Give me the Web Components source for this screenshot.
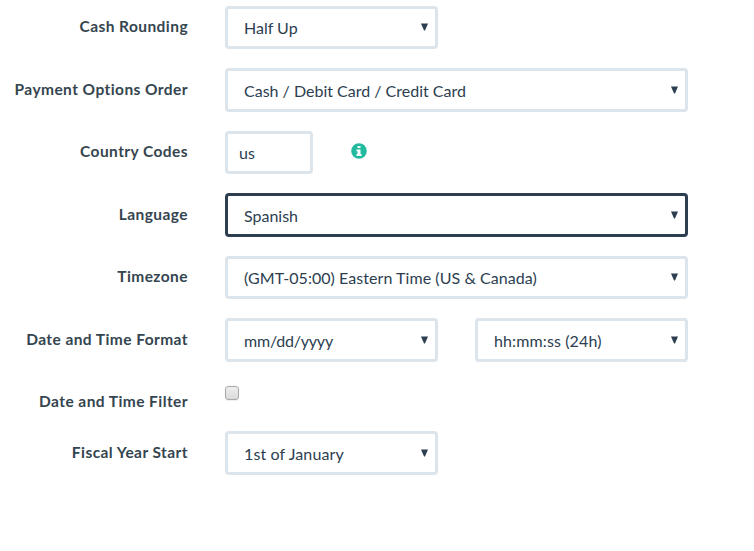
<!DOCTYPE html>
<html lang="en"><head><meta charset="utf-8"><title>Settings</title>
<style>body{margin:0;background:#fff;color:#2c3e50;font:400 16px/24px Lato,sans-serif}</style></head><body>
<settings-form></settings-form>
<script>
class FormRow extends HTMLElement{constructor(){super();this.attachShadow({mode:'open'}).innerHTML=`<style>
:host{display:grid;grid-template-columns:188px 1fr;column-gap:37px;height:43.2px;margin-bottom:19.3px;align-items:start}
:host([compact]){height:25px;margin-bottom:25.7px}
.label{font-weight:700;font-size:15.5px;letter-spacing:.43px;font-variant-ligatures:none;line-height:22px;text-align:right;padding-top:9.2px;white-space:nowrap;color:#34454f}
.body{display:flex;gap:37px;align-items:flex-start}</style>
<div class="label">${this.getAttribute('label')}</div><div class="body"><slot></slot></div>`}}
class SelectField extends HTMLElement{constructor(){super();this.attachShadow({mode:'open'}).innerHTML=`<style>
:host{display:flex;box-sizing:border-box;width:213px;height:43.2px;border:3px solid #dce4ec;border-radius:4px;padding:0 7px 0 16px;align-items:center;justify-content:space-between;white-space:nowrap}
:host([wide]){width:463px}:host([focused]){border-color:#2c3e50}
.text{padding-top:1.2px;letter-spacing:var(--tracking,0)}svg{display:block;flex:none}</style>
<span class="text"><slot></slot></span><svg width="7" height="8" viewBox="0 0 7 8"><path d="M0 .5h7L4 7.500h-1z" fill="#2c3e50"/></svg>`}}
class TextField extends HTMLElement{constructor(){super();this.attachShadow({mode:'open'}).innerHTML=`<style>
:host{display:flex;box-sizing:border-box;width:88px;height:43.2px;border:3px solid #dce4ec;border-radius:4px;padding:1.2px 11px 0;align-items:center}</style><slot></slot>`}}
class InfoIcon extends HTMLElement{constructor(){super();this.attachShadow({mode:'open'}).innerHTML=`<style>:host{display:block;margin:12.1px 0 0 .5px}svg{display:block}</style>
<svg width="16" height="16" viewBox="0 0 16 16"><circle cx="8" cy="8" r="7.8" fill="#22bba0"/><path d="M6.500 3h3v2h-3zM5.500 6.500h4V11h1v2h-5v-2h1V8.200h-1z" fill="#fff"/></svg>`}}
class CheckBox extends HTMLElement{constructor(){super();this.attachShadow({mode:'open'}).innerHTML=`<style>:host{display:block;box-sizing:border-box;width:14px;height:14px;border:1px solid #a8a8a8;border-radius:3px;background:linear-gradient(#eee,#dadada);margin-top:5.1px;box-shadow:0 1px 1px #0001}</style>`}}
class SettingsForm extends HTMLElement{constructor(){super();this.attachShadow({mode:'open'}).innerHTML=`<style>:host{display:block;width:754px;height:551px;padding-top:5.9px;box-sizing:border-box;overflow:hidden}
.zone{--tracking:.06px}.date{--tracking:-.2px}.hour,.fiscal{--tracking:.12px}.fiscal{height:43.6px}</style>
<form-row label="Cash Rounding"><select-field>Half Up</select-field></form-row>
<form-row label="Payment Options Order"><select-field wide>Cash / Debit Card / Credit Card</select-field></form-row>
<form-row label="Country Codes"><text-field>us</text-field><info-icon></info-icon></form-row>
<form-row label="Language"><select-field wide focused>Spanish</select-field></form-row>
<form-row label="Timezone"><select-field class="zone" wide>(GMT-05:00) Eastern Time (US &amp; Canada)</select-field></form-row>
<form-row label="Date and Time Format"><select-field class="date">mm/dd/yyyy</select-field><select-field class="hour">hh:mm:ss (24h)</select-field></form-row>
<form-row compact label="Date and Time Filter"><check-box></check-box></form-row>
<form-row label="Fiscal Year Start"><select-field class="fiscal">1st of January</select-field></form-row>`}}
customElements.define('form-row',FormRow);customElements.define('select-field',SelectField);customElements.define('text-field',TextField);customElements.define('info-icon',InfoIcon);customElements.define('check-box',CheckBox);customElements.define('settings-form',SettingsForm);
</script></body></html>
